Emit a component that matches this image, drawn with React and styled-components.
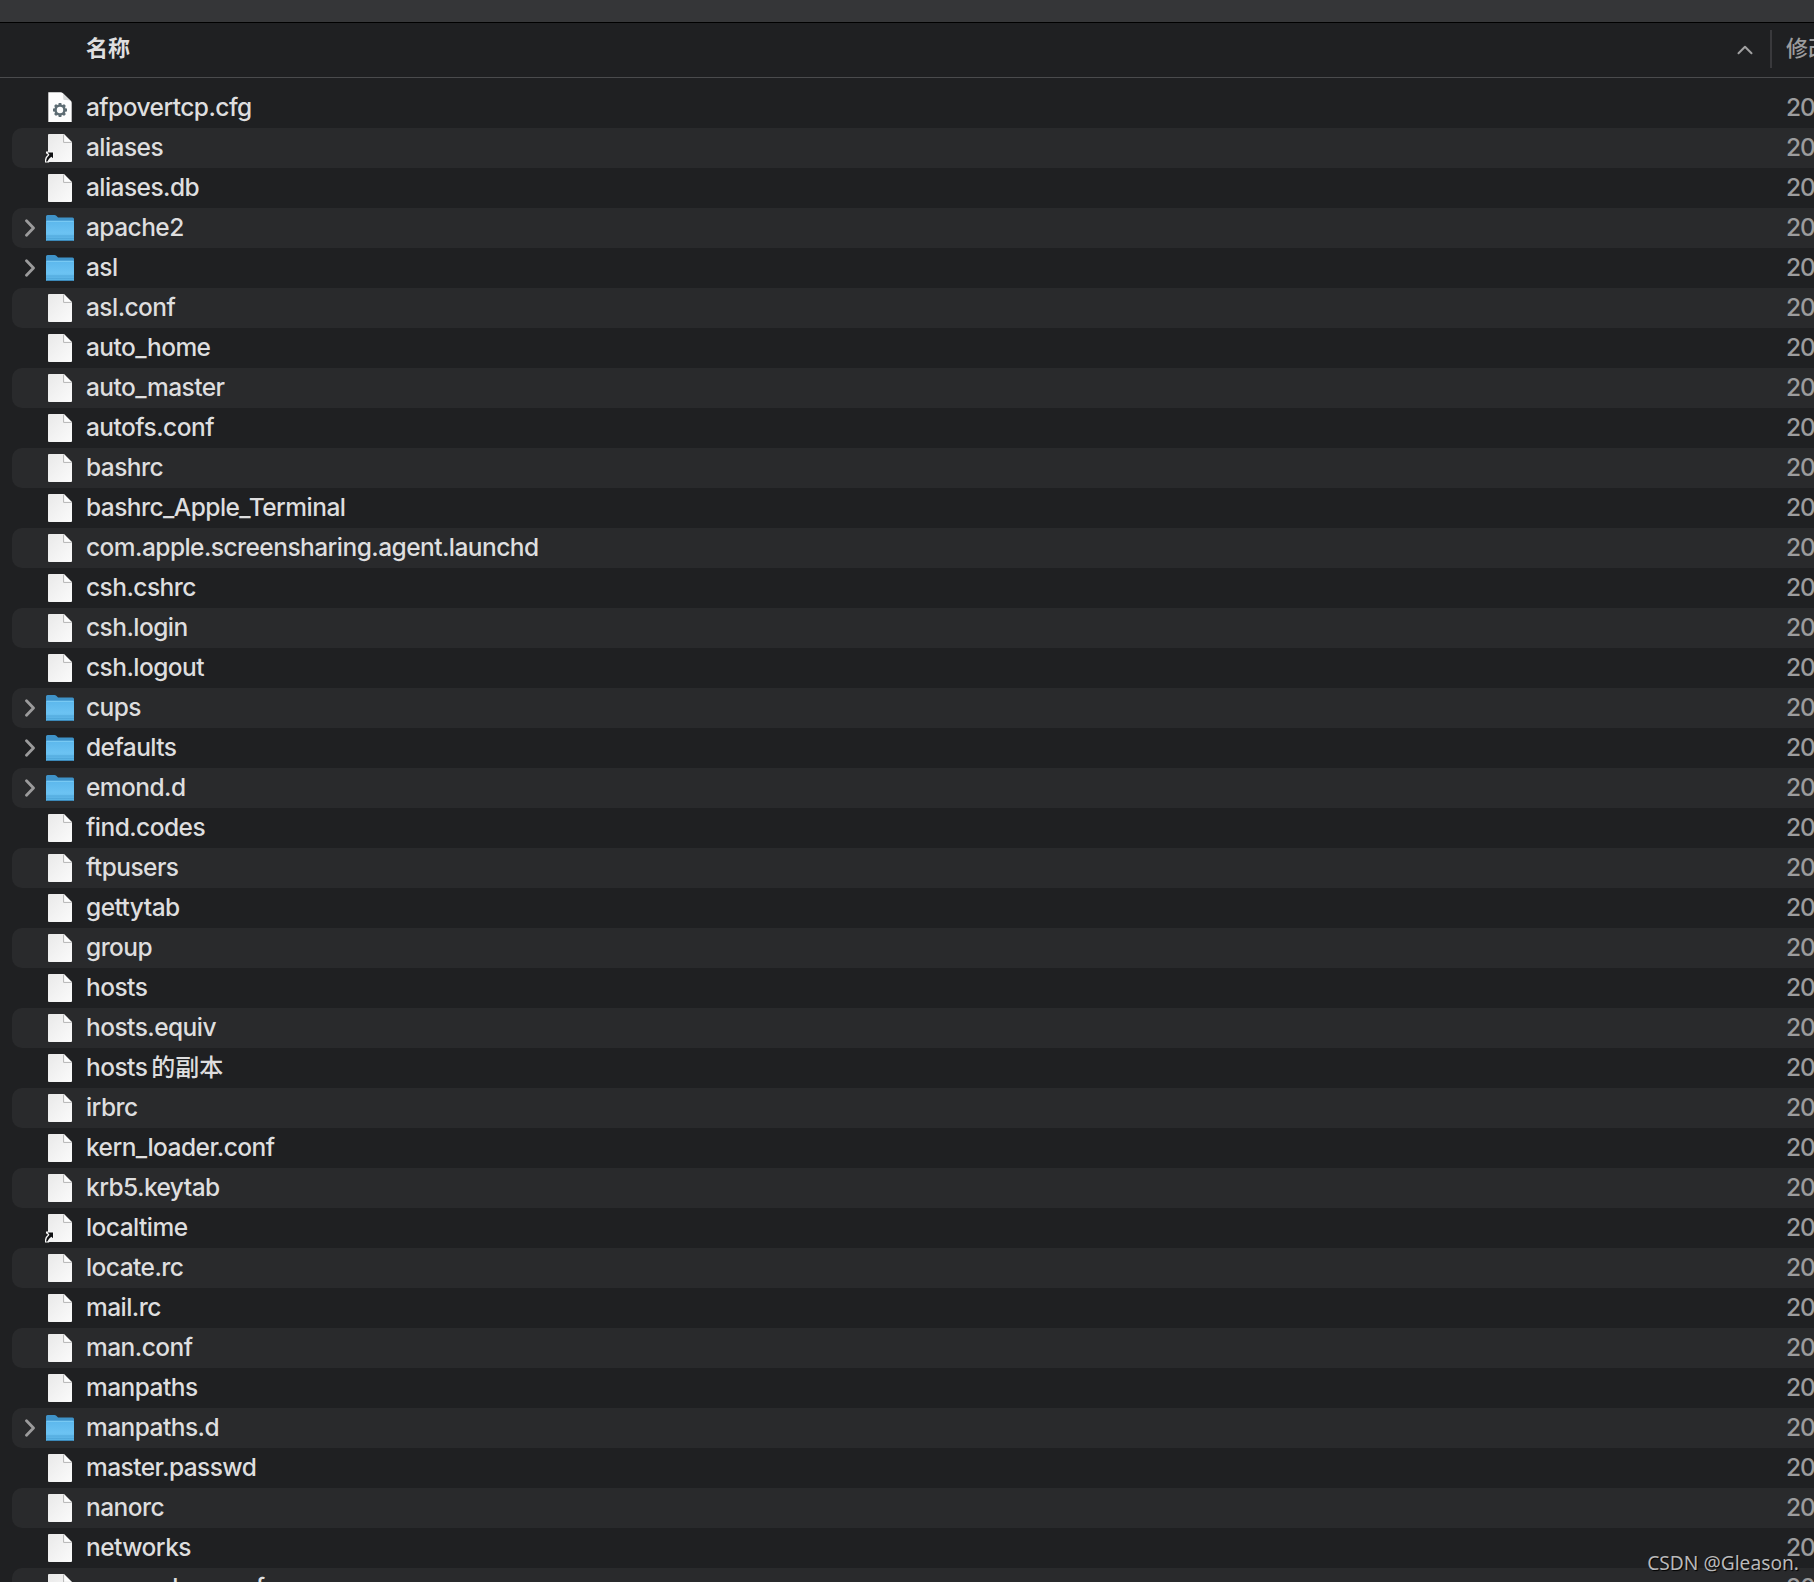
import styled, { createGlobalStyle } from "styled-components";

const FILES = [
  { name: "afpovertcp.cfg", kind: "config" },
  { name: "aliases", kind: "alias" },
  { name: "aliases.db" },
  { name: "apache2", kind: "folder" },
  { name: "asl", kind: "folder" },
  { name: "asl.conf" },
  { name: "auto_home" },
  { name: "auto_master" },
  { name: "autofs.conf" },
  { name: "bashrc" },
  { name: "bashrc_Apple_Terminal" },
  { name: "com.apple.screensharing.agent.launchd" },
  { name: "csh.cshrc" },
  { name: "csh.login" },
  { name: "csh.logout" },
  { name: "cups", kind: "folder" },
  { name: "defaults", kind: "folder" },
  { name: "emond.d", kind: "folder" },
  { name: "find.codes" },
  { name: "ftpusers" },
  { name: "gettytab" },
  { name: "group" },
  { name: "hosts" },
  { name: "hosts.equiv" },
  { name: "hosts", suffix: "的副本" },
  { name: "irbrc" },
  { name: "kern_loader.conf" },
  { name: "krb5.keytab" },
  { name: "localtime", kind: "alias" },
  { name: "locate.rc" },
  { name: "mail.rc" },
  { name: "man.conf" },
  { name: "manpaths" },
  { name: "manpaths.d", kind: "folder" },
  { name: "master.passwd" },
  { name: "nanorc" },
  { name: "networks" },
  { name: "newsyslog.conf" },
];

function FolderIcon() {
  return (
    <Icon viewBox="0 0 32 32">
      <path d="M2 4.500Q2 3 3.500 3H10.500Q11.500 3 12.300 3.700L13.500 4.900Q14 5.400 15 5.400H28.500Q30 5.400 30 7V27.500Q30 29 28.500 29H3.500Q2 29 2 27.500Z" fill="#3f93c9" />
      <path d="M2 10Q2 8.800 3.200 8.800H28.800Q30 8.800 30 10V27.500Q30 29 28.500 29H3.500Q2 29 2 27.500Z" fill="url(#folderFill)" />
      <path d="M2.500 9.300H29.500" stroke="#7fcdf6" />
      <path d="M2 24H30M2 26.300H30" stroke="#489fd2" strokeWidth="0.700" />
      <path d="M3 28.500H29" stroke="#3b88b8" />
    </Icon>
  );
}

function FileIcon({ kind }) {
  if (kind === "config") {
    return (
      <Icon viewBox="0 0 32 32">
        <path d="M4.300 .2H16.500Q18 .2 19 1.200L27 9Q27.700 9.700 27.700 11V30H4.300Z" fill="#fdfdfd" />
        <path d="M18.300 .9L27.200 9.400Q25.500 8 22 8H20.500Q19.200 8 19.200 6.500V4Q19.200 2 18.300 .9Z" fill="#d7d9da" />
        <g transform="translate(16 18)" stroke="#5d6c73" fill="none">
          <circle r="4.500" strokeWidth="2.600" />
          <path
            strokeWidth="2.800"
            d="M0-5V-7M3.540-3.540L4.950-4.950M5 0H7M3.540 3.540L4.950 4.950M0 5V7M-3.540 3.540L-4.950 4.950M-5 0H-7M-3.540-3.540L-4.950-4.950"
          />
        </g>
      </Icon>
    );
  }

  return (
    <Icon viewBox="0 0 32 32">
      <path d="M4 3Q4 2 5 2H19.800L28 10.200V29Q28 30 27 30H5Q4 30 4 29Z" fill="url(#pageFill)" />
      <path d="M19.800 2L28 10.200H19.800Z" fill="#fdfdfd" />
      <path d="M19.600 2.500V10.400H27.500" fill="none" stroke="#b4b4b4" />
      {kind === "alias" && (
        <>
          <path d="M2 19.500H10V27.500L8 27L6 28.500L5 30.500H1V27.500Q1.500 24.500 4 22.800L2 21.200Z" fill="#f8f8f8" />
          <path d="M3.600 20.500H9V26.300L7.300 24.700Q4.800 26 3.400 29.600H2Q2.300 25.500 5.500 22.800Z" fill="#101113" />
        </>
      )}
    </Icon>
  );
}

export default function App() {
  return (
    <Window>
      <GlobalStyle />
      <SharedGradients />
      <Toolbar />

      <Header>
        <NameTitle>名称</NameTitle>
        <SortArrow viewBox="0 0 16 10">
          <path d="M1.500 8.300L8 1.700L14.500 8.300" />
        </SortArrow>
        <Divider />
        <DateTitle>修改</DateTitle>
      </Header>

      <FileList>
        {FILES.map(({ name, suffix, kind }, i) => (
          <Row key={i} $striped={i % 2 === 1}>
            <Disclosure>
              {kind === "folder" && (
                <Chevron viewBox="0 0 12 18">
                  <path d="M2.500 1.700L9.500 9L2.500 16.300" />
                </Chevron>
              )}
            </Disclosure>
            {kind === "folder" ? <FolderIcon /> : <FileIcon kind={kind} />}
            <FileName>
              {name}
              {suffix && <Suffix>{suffix}</Suffix>}
            </FileName>
            <FileDate>20</FileDate>
          </Row>
        ))}
      </FileList>

      <Watermark>CSDN @Gleason.</Watermark>
    </Window>
  );
}

function SharedGradients() {
  return (
    <Defs>
      <linearGradient id="pageFill" x1="0" y1="0" x2="1" y2="1">
        <stop offset="0" stopColor="#e9e9e9" />
        <stop offset="1" stopColor="#fbfbfb" />
      </linearGradient>
      <linearGradient id="folderFill" x1="0" y1="0" x2="0" y2="1">
        <stop offset="0" stopColor="#5bb7ec" />
        <stop offset="0.600" stopColor="#6cc3f3" />
        <stop offset="1" stopColor="#56b0e2" />
      </linearGradient>
    </Defs>
  );
}

const GlobalStyle = createGlobalStyle`
  body {
    margin: 0;
    background: #1f2022;
  }
`;

const Window = styled.div`
  position: relative;
  width: 1814px;
  height: 1582px;
  overflow: hidden;
  background: #1f2022;
  color: #dededf;
  font-family: Inter, "Noto Sans CJK SC", sans-serif;
  font-size: 24.5px;
`;

const Defs = styled.svg`
  position: absolute;
  width: 0;
  height: 0;
`;

const Toolbar = styled.div`
  box-sizing: border-box;
  height: 23px;
  background: #353638;
  border-bottom: 1px solid #000;
`;

const Header = styled.div`
  box-sizing: border-box;
  display: flex;
  align-items: center;
  height: 55px;
  padding-left: 86px;
  border-bottom: 1px solid #4a4b4d;
  font-size: 22px;
  white-space: nowrap;
`;

const NameTitle = styled.div`
  flex: 1;
  font-weight: 700;
  line-height: 30px;
  padding-bottom: 4px;
`;

const SortArrow = styled.svg`
  width: 16px;
  height: 10px;
  margin-right: 17px;
  fill: none;
  stroke: #a0a0a1;
  stroke-width: 2;
  stroke-linecap: round;
  stroke-linejoin: round;
`;

const Divider = styled.div`
  width: 2px;
  height: 38px;
  margin-bottom: 2px;
  background: #39393c;
`;

const DateTitle = styled.div`
  width: 28px;
  padding: 0 0 4px 14px;
  overflow: hidden;
  color: #9c9c9d;
  font-weight: 500;
  line-height: 30px;
`;

const FileList = styled.div`
  padding: 10px 0 0 12px;
`;

const Row = styled.div`
  display: flex;
  align-items: center;
  height: 40px;
  border-radius: 10px 0 0 10px;
  background: ${({ $striped }) => ($striped ? "#292a2c" : "transparent")};
  white-space: nowrap;
`;

const Disclosure = styled.div`
  display: flex;
  width: 32px;
`;

const Chevron = styled.svg`
  width: 12px;
  height: 18px;
  margin-left: 12px;
  margin-bottom: 1px;
  fill: none;
  stroke: #9b9b9c;
  stroke-width: 2.8;
  stroke-linecap: round;
  stroke-linejoin: round;
`;

const Icon = styled.svg`
  flex: none;
  width: 32px;
  height: 32px;
`;

const FileName = styled.div`
  flex: 1;
  margin-left: 10px;
  padding-bottom: 2px;
  font-weight: 450;
  letter-spacing: -0.55px;
  line-height: 38px;
`;

const Suffix = styled.span`
  margin-left: 4px;
  font-size: 24px;
  letter-spacing: 0;
  line-height: 1;
`;

const FileDate = styled.div`
  width: 28px;
  padding-bottom: 2px;
  color: #9c9c9d;
  font-weight: 500;
  letter-spacing: -1px;
  line-height: 38px;
`;

/* 우측 하단 워터마크 */
const Watermark = styled.div`
  position: absolute;
  right: 15px;
  bottom: 6px;
  color: #b9b9ba;
  font-family: "Noto Sans", sans-serif;
  font-size: 19.2px;
  line-height: 27px;
  text-shadow: 1px 1px 1px #000;
`;
